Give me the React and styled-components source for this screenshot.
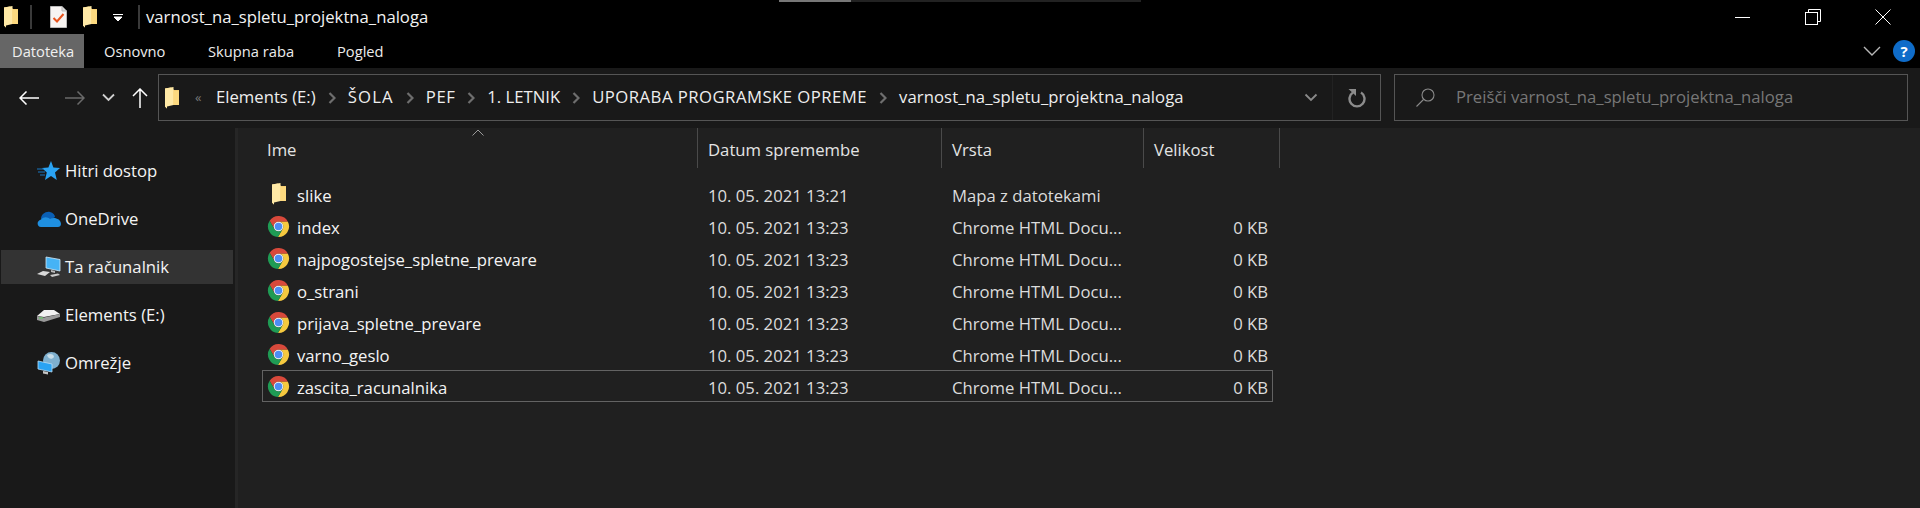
import styled, { createGlobalStyle } from 'styled-components'

const FONT = `'Open Sans', 'Noto Sans', 'Liberation Sans', sans-serif`

const GlobalStyle = createGlobalStyle`
  html, body {
    margin: 0;
    padding: 0;
    background: #202020;
  }
  * {
    box-sizing: border-box;
  }
`

const FolderIcon = ({ width = 14, height = 22 }) => (
  <svg width={width} height={height} viewBox='0 0 14 22'>
    <path d='M0 1.5 L6 0.5 L9 3 L14 3 L14 18 L2 18 L2 21.5 L0 19.5 Z' fill='#f6cf72' />
    <path d='M0 1.5 L8.5 0 L8.5 18 L2 19.5 L2 21.5 L0 19.5 Z' fill='#ffe9a6' />
    <path d='M8.5 4 L14 4 L14 18 L8.5 18 Z' fill='#fcd97f' />
  </svg>
)

const TaskIcon = () => (
  <svg width='17' height='22' viewBox='0 0 17 22'>
    <path d='M0.5 0.5 H12 L16.5 5 V21.5 H0.5 Z' fill='#f7f4f2' stroke='#b9b9b9' />
    <path d='M12 0.5 V5 H16.5' fill='#dcdcdc' stroke='#b9b9b9' />
    <path d='M3.5 12 L7 15.5 L13.5 8' fill='none' stroke='#e8541e' strokeWidth='2' />
  </svg>
)

const ChromeIcon = () => (
  <svg width='25' height='25' viewBox='0 0 24 24'>
    <path d='M2.77 6.01 A11 11 0 0 1 21.8 7 H12 A5 5 0 0 0 7.67 14.5 Z' fill='#d8493b' />
    <path d='M21.8 7 A11 11 0 0 1 11.43 22.99 L16.33 14.5 A5 5 0 0 0 12 7 Z' fill='#f6c93f' />
    <path d='M11.43 22.99 A11 11 0 0 1 2.77 6.01 L7.67 14.5 A5 5 0 0 0 16.33 14.5 Z' fill='#1f9b54' />
    <circle cx='12' cy='12' r='5' fill='#f2f2f2' />
    <circle cx='12' cy='12' r='3.9' fill='#4d8df5' />
  </svg>
)

const StarIcon = () => (
  <svg width='23' height='20' viewBox='0 0 23 20'>
    <path d='M14 0 L16.4 6.6 L23 7 L18 11.6 L19.8 19 L14 15 L8 19 L9.8 11.6 L5 7 L11.4 6.6 Z' fill='#2aa3f3' />
    <path d='M0 8 H7 M1 11 H8 M3 14 H8' stroke='#1878c4' strokeWidth='1' />
  </svg>
)

const CloudIcon = () => (
  <svg width='24' height='16' viewBox='0 0 24 16'>
    <path d='M4 8 C4 3 9 0 13 1 C16 1.500 18 4 18 6 L10 11 Z' fill='#0a5fb4' />
    <path d='M4 16 C0 16 -1 10 4 8.500 C7 5 11 6 13 8 C17 5.500 24 8 24 13 C24 15 22.500 16 21 16 Z' fill='#1f8fe0' />
  </svg>
)

const ComputerIcon = () => (
  <svg width='24' height='22' viewBox='0 0 24 22'>
    <path d='M9 1 L23 3.500 V15 L9 12 Z' fill='#46b3f5' stroke='#cfe8f8' strokeWidth='0.8' />
    <path d='M14 14 L18 15 V17 L14 16 Z' fill='#b9b9b9' />
    <path d='M0 18 L6 15 L13 16 L8 20 Z' fill='#d8d8d8' />
    <path d='M13 19 L21 17.500 L23 19 L15 21 Z' fill='#c9c9c9' />
  </svg>
)

const DriveIcon = () => (
  <svg width='23' height='13' viewBox='0 0 23 13'>
    <path d='M0 7 L7 1 H17 L23 5 L7 8 Z' fill='#f1f1f1' />
    <path d='M0 7 L7 8.500 L23 5 V8 L7 13 L0 11 Z' fill='#9a9a9a' />
    <path d='M2 9 H6' stroke='#5bd05b' strokeWidth='1' />
  </svg>
)

const NetworkIcon = () => (
  <svg width='23' height='23' viewBox='0 0 23 23'>
    <circle cx='14.500' cy='8.500' r='8.500' fill='#7fb0cf' />
    <path d='M10 3 C13 1 17 2 17 5 C15 8 11 7 10 3 Z' fill='#c8dde9' />
    <path d='M1 9 L15 12 V20 L1 17 Z' fill='#2aa3f3' stroke='#b7ddf5' strokeWidth='0.8' />
    <path d='M6 19 L11 20 V22.500 L6 21.500 Z' fill='#c4c4c4' />
  </svg>
)

const ArrowLeft = ({ color = '#fff' }) => (
  <svg width='20' height='14' viewBox='0 0 20 14'>
    <path d='M20 7 H1 M7.500 0.500 L1 7 L7.500 13.500' fill='none' stroke={color} strokeWidth='1.500' />
  </svg>
)

const ArrowRight = ({ color = '#6a6a6a' }) => (
  <svg width='20' height='14' viewBox='0 0 20 14'>
    <path d='M0 7 H19 M12.500 0.500 L19 7 L12.500 13.500' fill='none' stroke={color} strokeWidth='1.500' />
  </svg>
)

const ArrowUp = () => (
  <svg width='16' height='20' viewBox='0 0 16 20'>
    <path d='M8 20 V1 M1 8 L8 1 L15 8' fill='none' stroke='#fff' strokeWidth='1.500' />
  </svg>
)

const SmallChevron = ({ color = '#d0d0d0', width = 13 }) => (
  <svg width={width} height='9' viewBox='0 0 13 9'>
    <path d='M1 1.500 L6.500 7 L12 1.500' fill='none' stroke={color} strokeWidth='1.800' />
  </svg>
)

const Crumb = () => (
  <svg width='8' height='12' viewBox='0 0 8 12'>
    <path d='M1.500 1 L6.500 6 L1.500 11' fill='none' stroke='#6e6e6e' strokeWidth='2.200' />
  </svg>
)

const crumbs = [
  { text: 'Elements (E:)', tracking: 0 },
  { text: 'ŠOLA', tracking: 1.2 },
  { text: 'PEF', tracking: 0.5 },
  { text: '1. LETNIK', tracking: 0 },
  { text: 'UPORABA PROGRAMSKE OPREME', tracking: 0.48 },
  { text: 'varnost_na_spletu_projektna_naloga', tracking: 0.07 }
]

const places = [
  { name: 'Hitri dostop', icon: <StarIcon /> },
  { name: 'OneDrive', icon: <CloudIcon /> },
  { name: 'Ta računalnik', icon: <ComputerIcon />, selected: true },
  { name: 'Elements (E:)', icon: <DriveIcon /> },
  { name: 'Omrežje', icon: <NetworkIcon /> }
]

const HTML_TYPE = 'Chrome HTML Docu...'

const files = [
  { name: 'slike', date: '10. 05. 2021 13:21', type: 'Mapa z datotekami', size: '', folder: true },
  { name: 'index', date: '10. 05. 2021 13:23', type: HTML_TYPE, size: '0 KB' },
  { name: 'najpogostejse_spletne_prevare', date: '10. 05. 2021 13:23', type: HTML_TYPE, size: '0 KB' },
  { name: 'o_strani', date: '10. 05. 2021 13:23', type: HTML_TYPE, size: '0 KB' },
  { name: 'prijava_spletne_prevare', date: '10. 05. 2021 13:23', type: HTML_TYPE, size: '0 KB' },
  { name: 'varno_geslo', date: '10. 05. 2021 13:23', type: HTML_TYPE, size: '0 KB' },
  { name: 'zascita_racunalnika', date: '10. 05. 2021 13:23', type: HTML_TYPE, size: '0 KB', focused: true }
]

const App = () => (
  <Window>
    <GlobalStyle />
    <ScrollHint>
      <ScrollThumb />
    </ScrollHint>
    <TitleBar>
      <QuickSlot $width={30} $end={8}><FolderIcon /></QuickSlot>
      <Divider />
      <QuickSlot $width={40}><TaskIcon /></QuickSlot>
      <QuickSlot $width={24}><FolderIcon /></QuickSlot>
      <QuickSlot $width={36} $end={5}>
        <svg width='10' height='7' viewBox='0 0 10 7'>
          <path d='M0 0.500 H10 M1 3 H9 L5 7 Z' fill='#fff' stroke='#fff' strokeWidth='1' />
        </svg>
      </QuickSlot>
      <Divider />
      <WindowTitle>varnost_na_spletu_projektna_naloga</WindowTitle>
      <WindowControls>
        <ControlButton>
          <svg width='16' height='16' viewBox='0 0 16 16'>
            <path d='M0 8.500 H15' stroke='#fff' />
          </svg>
        </ControlButton>
        <ControlButton>
          <svg width='16' height='16' viewBox='0 0 16 16'>
            <path d='M3.500 3.500 V0.500 H15.500 V12.500 H12.500' fill='none' stroke='#fff' />
            <rect x='0.500' y='3.500' width='12' height='12' fill='#000' stroke='#fff' />
          </svg>
        </ControlButton>
        <ControlButton>
          <svg width='16' height='16' viewBox='0 0 16 16'>
            <path d='M0.500 0.500 L15.500 15.500 M15.500 0.500 L0.500 15.500' stroke='#fff' />
          </svg>
        </ControlButton>
      </WindowControls>
    </TitleBar>
    <RibbonTabs>
      <FileTab>Datoteka</FileTab>
      <RibbonTab $width={104}>Osnovno</RibbonTab>
      <RibbonTab $width={129}>Skupna raba</RibbonTab>
      <RibbonTab $width={80}>Pogled</RibbonTab>
      <RibbonRight>
        <svg width='18' height='10' viewBox='0 0 18 10'>
          <path d='M1 1 L9 9 L17 1' fill='none' stroke='#b8b8b8' strokeWidth='1.400' />
        </svg>
        <HelpBadge>?</HelpBadge>
      </RibbonRight>
    </RibbonTabs>
    <Toolbar>
      <NavButtons>
        <NavSlot><ArrowLeft /></NavSlot>
        <NavSlot><ArrowRight /></NavSlot>
        <NavSlot><SmallChevron /></NavSlot>
        <NavSlot><ArrowUp /></NavSlot>
      </NavButtons>
      <AddressBox>
        <AddressFolder><FolderIcon /></AddressFolder>
        <Overflow>«</Overflow>
        {crumbs.map((crumb, i) => (
          <CrumbItem key={crumb.text}>
            {i > 0 && <Crumb />}
            <CrumbText $tracking={crumb.tracking}>{crumb.text}</CrumbText>
          </CrumbItem>
        ))}
        <AddressEnd>
          <DropSlot><SmallChevron color='#8a8a8a' width={14} /></DropSlot>
          <RefreshSlot>
            <svg width='18' height='20' viewBox='0 0 18 20'>
              <path d='M5 4.500 A7.500 7.500 0 1 0 13 4.500' fill='none' stroke='#8c8c8c' strokeWidth='2.400' />
              <path d='M0.500 1 L8 1 L8 8 Z' fill='#8c8c8c' />
            </svg>
          </RefreshSlot>
        </AddressEnd>
      </AddressBox>
      <SearchBox>
        <svg width='19' height='19' viewBox='0 0 19 19'>
          <circle cx='12' cy='7' r='6' fill='none' stroke='#8a8a8a' strokeWidth='1.100' />
          <path d='M7.500 11.500 L0.500 18.500' stroke='#8a8a8a' strokeWidth='1.100' />
        </svg>
        <SearchText>Preišči varnost_na_spletu_projektna_naloga</SearchText>
      </SearchBox>
    </Toolbar>
    <Main>
      <Sidebar>
        {places.map(place => (
          <Place key={place.name} $selected={place.selected}>
            <PlaceIcon>{place.icon}</PlaceIcon>
            <PlaceName>{place.name}</PlaceName>
          </Place>
        ))}
      </Sidebar>
      <Content>
        <SortArrow>
          <svg width='12' height='7' viewBox='0 0 12 7'>
            <path d='M0.500 6.500 L6 1 L11.500 6.500' fill='none' stroke='#9a9a9a' />
          </svg>
        </SortArrow>
        <Header>
          <HeaderCell>Ime</HeaderCell>
          <HeaderCell>Datum spremembe</HeaderCell>
          <HeaderCell>Vrsta</HeaderCell>
          <HeaderCell>Velikost</HeaderCell>
        </Header>
        <Rows>
          {files.map(file => (
            <Row key={file.name} $focused={file.focused}>
              <NameCell>
                <FileIcon>{file.folder ? <FolderIcon /> : <ChromeIcon />}</FileIcon>
                <FileName>{file.name}</FileName>
              </NameCell>
              <Cell>{file.date}</Cell>
              <Cell>{file.type}</Cell>
              <SizeCell>{file.size}</SizeCell>
            </Row>
          ))}
        </Rows>
      </Content>
    </Main>
  </Window>
)

export default App

const Window = styled.div`
  position: relative;
  width: 1920px;
  height: 508px;
  overflow: hidden;
  display: flex;
  flex-direction: column;
  background: #202020;
  color: #f4f4f4;
  font-family: ${FONT};
  font-size: 16.7px;
`

const ScrollHint = styled.div`
  position: absolute;
  top: 0;
  left: 779px;
  width: 362px;
  height: 2px;
  background: #222;
`

const ScrollThumb = styled.div`
  width: 72px;
  height: 2px;
  background: #777;
`

const TitleBar = styled.div`
  height: 34px;
  background: #000;
  display: flex;
  align-items: center;
`

const QuickSlot = styled.div`
  width: ${p => p.$width}px;
  height: 34px;
  display: flex;
  align-items: center;
  justify-content: center;
  padding-right: ${p => p.$end || 0}px;
`

const Divider = styled.div`
  width: 2px;
  height: 24px;
  margin-right: 6px;
  background: #3a3a3a;
`

const WindowTitle = styled.div`
  color: #f2f2f2;
  padding-bottom: 2px;
`

const WindowControls = styled.div`
  margin-left: auto;
  display: flex;
  padding-right: 29px;
  gap: 54px;
  padding-bottom: 1px;
`

const ControlButton = styled.div`
  width: 16px;
  height: 16px;
  display: flex;
`

const RibbonTabs = styled.div`
  height: 34px;
  background: #000;
  display: flex;
  align-items: stretch;
  font-size: 14.7px;
`

const FileTab = styled.div`
  width: 84px;
  background: #666;
  color: #f0f0f0;
  display: flex;
  align-items: center;
  padding-left: 12px;
  padding-bottom: 1px;
`

const RibbonTab = styled.div`
  width: ${p => p.$width}px;
  display: flex;
  align-items: center;
  padding-left: 20px;
  padding-bottom: 1px;
  color: #ececec;
`

const RibbonRight = styled.div`
  margin-left: auto;
  display: flex;
  align-items: center;
  gap: 12px;
  padding-right: 5px;
`

const HelpBadge = styled.div`
  width: 22px;
  height: 22px;
  border-radius: 50%;
  background: #0f6cc9;
  color: #fff;
  font-size: 15px;
  font-weight: 700;
  display: flex;
  align-items: center;
  justify-content: center;
`

const Toolbar = styled.div`
  height: 60px;
  background: #191919;
  display: flex;
  align-items: flex-start;
  padding: 6px 12px 0 0;
`

const NavButtons = styled.div`
  width: 158px;
  height: 47px;
  display: grid;
  grid-template-columns: 57px 35px 33px 30px;
  align-items: center;
  justify-items: center;
`

const NavSlot = styled.div`
  display: flex;
`

const AddressBox = styled.div`
  width: 1223px;
  height: 47px;
  border: 1px solid #555;
  display: flex;
  align-items: center;
  padding-left: 6px;
`

const AddressFolder = styled.div`
  display: flex;
  margin-right: 16px;
`

const Overflow = styled.div`
  color: #777;
  font-size: 13px;
  width: 21px;
  padding-bottom: 2px;
`

const CrumbItem = styled.div`
  display: flex;
  align-items: center;
  gap: 12px;
  margin-right: 12px;
`

const CrumbText = styled.span`
  color: #eee;
  padding-bottom: 2px;
  letter-spacing: ${p => p.$tracking}px;
`

const AddressEnd = styled.div`
  margin-left: auto;
  display: flex;
  align-items: center;
  height: 100%;
`

const DropSlot = styled.div`
  width: 44px;
  height: 100%;
  display: flex;
  align-items: center;
  justify-content: center;
  border-right: 1px solid #222;
`

const RefreshSlot = styled.div`
  width: 47px;
  display: flex;
  align-items: center;
  justify-content: center;
`

const SearchBox = styled.div`
  width: 514px;
  height: 47px;
  margin-left: 13px;
  border: 1px solid #555;
  display: flex;
  align-items: center;
  padding-left: 21px;
  gap: 21px;
`

const SearchText = styled.span`
  color: #777;
  padding-bottom: 2px;
`

const Main = styled.div`
  flex: 1;
  display: flex;
  min-height: 0;
`

const Sidebar = styled.div`
  width: 238px;
  background: #191919;
  border-right: 3px solid #262626;
  padding: 26px 2px 0 1px;
  display: flex;
  flex-direction: column;
  gap: 14px;
`

const Place = styled.div`
  height: 34px;
  display: flex;
  align-items: center;
  padding-left: 36px;
  background: ${p => (p.$selected ? '#333' : 'transparent')};
`

const PlaceIcon = styled.div`
  width: 28px;
  display: flex;
  align-items: center;
`

const PlaceName = styled.span`
  padding-bottom: 2px;
`

const Content = styled.div`
  position: relative;
  flex: 1;
  background: #202020;
  padding-left: 24px;
`

const SortArrow = styled.div`
  position: absolute;
  top: 1px;
  left: 234px;
  display: flex;
`

const Header = styled.div`
  width: 1018px;
  height: 40px;
  display: grid;
  grid-template-columns: 436px 244px 202px 136px;
  margin-bottom: 10px;
`

const HeaderCell = styled.div`
  display: flex;
  align-items: center;
  padding-left: 10px;
  padding-top: 2px;
  border-right: 1px solid #4a4a4a;
  color: #e4e4e4;
  &:first-child {
    padding-left: 5px;
  }
`

const Rows = styled.div`
  width: 1011px;
  display: flex;
  flex-direction: column;
`

const Row = styled.div`
  height: 32px;
  display: grid;
  grid-template-columns: 436px 244px 202px 129px;
  align-items: center;
  outline: ${p => (p.$focused ? '1px solid #636363' : 'none')};
  outline-offset: -1px;
`

const NameCell = styled.div`
  display: flex;
  align-items: center;
  padding-left: 5px;
  height: 32px;
`

const FileName = styled.span`
  padding-top: 2px;
`

const FileIcon = styled.div`
  width: 30px;
  display: flex;
  justify-content: center;
  padding-right: 7px;
`

const Cell = styled.div`
  padding: 2px 0 0 10px;
  color: #dcdcdc;
  height: 32px;
  line-height: 32px;
`

const SizeCell = styled(Cell)`
  text-align: right;
  padding: 2px 5px 0 0;
`
